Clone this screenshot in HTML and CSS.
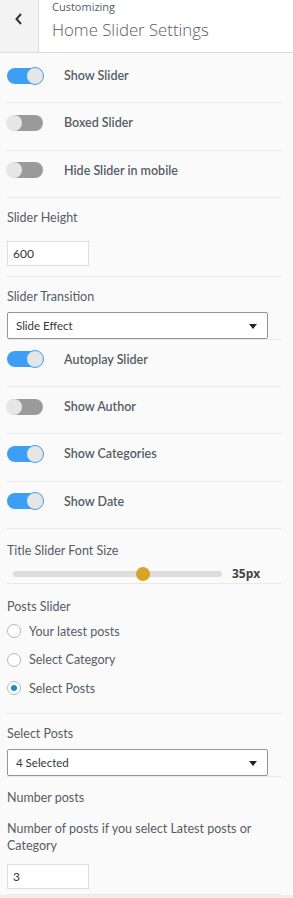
FILE: index.html
```html
<!DOCTYPE html>
<html lang="en">
<head>
    <meta charset="UTF-8">
    <meta name="viewport" content="width=device-width, initial-scale=1.0">
    <title>Home Slider Settings</title>
    <link rel="stylesheet" href="styles.css">
</head>
<body>
    <!-- Panel header -->
    <div class="panel-head">
        <button class="back" aria-label="Back">
            <svg width="8" height="12" viewBox="0 0 8 12"><polyline points="6,1 1.5,6 6,11" fill="none" stroke="#333" stroke-width="2"/></svg>
        </button>
        <div class="panel-title">
            <span class="crumb">Customizing</span>
            <h3>Home Slider Settings</h3>
        </div>
    </div>

    <ul class="controls">
        <li class="control first">
            <label class="switch-row"><span class="toggle on"></span><span class="switch-label">Show Slider</span></label>
        </li>
        <li class="control">
            <label class="switch-row"><span class="toggle"></span><span class="switch-label">Boxed Slider</span></label>
        </li>
        <li class="control">
            <label class="switch-row"><span class="toggle"></span><span class="switch-label">Hide Slider in mobile</span></label>
        </li>
        <li class="control block">
            <span class="title">Slider Height</span>
            <div class="text-input small">600</div>
        </li>
        <li class="control block tight">
            <span class="title">Slider Transition</span>
            <div class="select">Slide Effect<span class="caret"></span></div>
        </li>
        <li class="control">
            <label class="switch-row"><span class="toggle on"></span><span class="switch-label">Autoplay Slider</span></label>
        </li>
        <li class="control">
            <label class="switch-row"><span class="toggle"></span><span class="switch-label">Show Author</span></label>
        </li>
        <li class="control">
            <label class="switch-row"><span class="toggle on"></span><span class="switch-label">Show Categories</span></label>
        </li>
        <li class="control">
            <label class="switch-row"><span class="toggle on"></span><span class="switch-label">Show Date</span></label>
        </li>
        <li class="control block range-ctl">
            <span class="title">Title Slider Font Size</span>
            <div class="range">
                <div class="track"><span class="thumb" style="left: 62%"></span></div>
                <span class="range-value">35px</span>
            </div>
        </li>
        <li class="control block radios">
            <span class="title">Posts Slider</span>
            <label class="radio"><span class="dot"></span>Your latest posts</label>
            <label class="radio"><span class="dot"></span>Select Category</label>
            <label class="radio"><span class="dot checked"></span>Select Posts</label>
        </li>
        <li class="control block tight posts-select">
            <span class="title">Select Posts</span>
            <div class="select">4 Selected<span class="caret"></span></div>
        </li>
        <li class="control block last">
            <span class="title">Number posts</span>
            <p class="desc">Number of posts if you select Latest posts or Category</p>
            <div class="text-input small">3</div>
        </li>
    </ul>
</body>
</html>
```

FILE: styles.css
```css
html {
    background-color: #eeeeee;
}
body {
    margin: 0;
    font-family: Lato, "Open Sans", sans-serif;
    font-size: 12px;
    color: #555d66;
    background-color: #fafafa;
}
.panel-head {
    display: flex;
    height: 52px;
    background-color: #fff;
    border-bottom: 1px solid #dddddd;
    font-family: "Open Sans", sans-serif;
}
.back {
    width: 39px;
    padding: 13px 0 0 0;
    display: flex;
    justify-content: center;
    align-items: flex-start;
    background-color: #f3f3f3;
    border: none;
    border-right: 1px solid #dddddd;
}
.panel-title {
    padding-left: 13px;
    display: flex;
    flex-direction: column;
}
.crumb {
    font-size: 11px;
    line-height: 14px;
    color: #555d66;
}
.panel-title h3 {
    margin: 6px 0 0 0;
    font-size: 16.75px;
    line-height: 20px;
    font-weight: 300;
    color: #555d66;
}
.controls {
    list-style: none;
    margin: 0;
    padding: 0 12px 0 7px;
}
.control {
    padding: 11px 0 18.3px 0;
    border-bottom: 1px solid #e9e9e9;
}
.control.first {
    padding-top: 14px;
}
.switch-row {
    display: flex;
    align-items: center;
    gap: 21px;
}
.switch-label {
    font-weight: 600;
    font-size: 12.5px;
    line-height: 17px;
}
.toggle {
    position: relative;
    width: 36px;
    height: 16px;
    border-radius: 8px;
    background-color: #9a9a9a;
}
.toggle::after {
    content: "";
    position: absolute;
    left: -1px;
    top: 0;
    width: 16px;
    height: 16px;
    border-radius: 50%;
    background-color: #e6e6e6;
}
.toggle.on {
    background-color: #3c9ff3;
}
.toggle.on::after {
    left: auto;
    right: -1px;
    top: -1px;
    width: 16px;
    height: 16px;
    border: 1px solid #3c9ff3;
}
.block {
    padding: 11px 0 10px 0;
    display: flex;
    flex-direction: column;
    align-items: flex-start;
    font-size: 12.5px;
}
.block.tight {
    padding-bottom: 0;
}
.title {
    line-height: 18px;
    margin-bottom: 14px;
}
.tight .title {
    margin-bottom: 6px;
}
.text-input {
    box-sizing: border-box;
    width: 82px;
    height: 25px;
    padding: 0 5px;
    line-height: 23px;
    background-color: #fff;
    border: 1px solid #dddddd;
    color: #32373c;
    font-size: 12px;
}
.select {
    position: relative;
    box-sizing: border-box;
    width: 261px;
    height: 27px;
    padding: 0 8px;
    line-height: 25px;
    font-size: 11.5px;
    color: #32373c;
    background-color: #fff;
    border: 1px solid #949494;
    border-radius: 2px;
}
.caret {
    position: absolute;
    right: 10px;
    top: 11px;
    border-left: 4.5px solid transparent;
    border-right: 4.5px solid transparent;
    border-top: 5px solid #222;
}
.range-ctl {
    padding: 13px 0 0 0;
}
.range-ctl .title {
    margin-bottom: 4px;
}
.range {
    display: flex;
    align-items: center;
    width: 100%;
    height: 19px;
}
.track {
    position: relative;
    width: 209px;
    height: 6px;
    margin-left: 6px;
    border-radius: 3px;
    background-color: #dddddd;
}
.thumb {
    position: absolute;
    top: -4px;
    width: 14px;
    height: 14px;
    margin-left: -7px;
    border-radius: 50%;
    background-color: #daa226;
}
.range-value {
    margin-left: 10px;
    font-family: "Open Sans", sans-serif;
    font-size: 12px;
    font-weight: 700;
    color: #444;
}
.radios {
    padding: 14px 0 10px 0;
}
.radios .title {
    margin-bottom: 1px;
}
.radio {
    display: flex;
    align-items: center;
    gap: 8px;
    height: 28.5px;
}
.dot {
    box-sizing: border-box;
    width: 14px;
    height: 14px;
    border-radius: 50%;
    border: 1px solid #b4b9be;
    background-color: #fff;
    display: flex;
    justify-content: center;
    align-items: center;
}
.dot.checked::before {
    content: "";
    width: 6px;
    height: 6px;
    border-radius: 50%;
    background-color: #1e8cbe;
}
.posts-select {
    padding-top: 11px;
}
.last {
    padding: 12px 0 5px 0;
}
.last .title {
    margin-bottom: 0;
}
.desc {
    margin: 13px 0 10px 0;
    line-height: 17px;
}
```
